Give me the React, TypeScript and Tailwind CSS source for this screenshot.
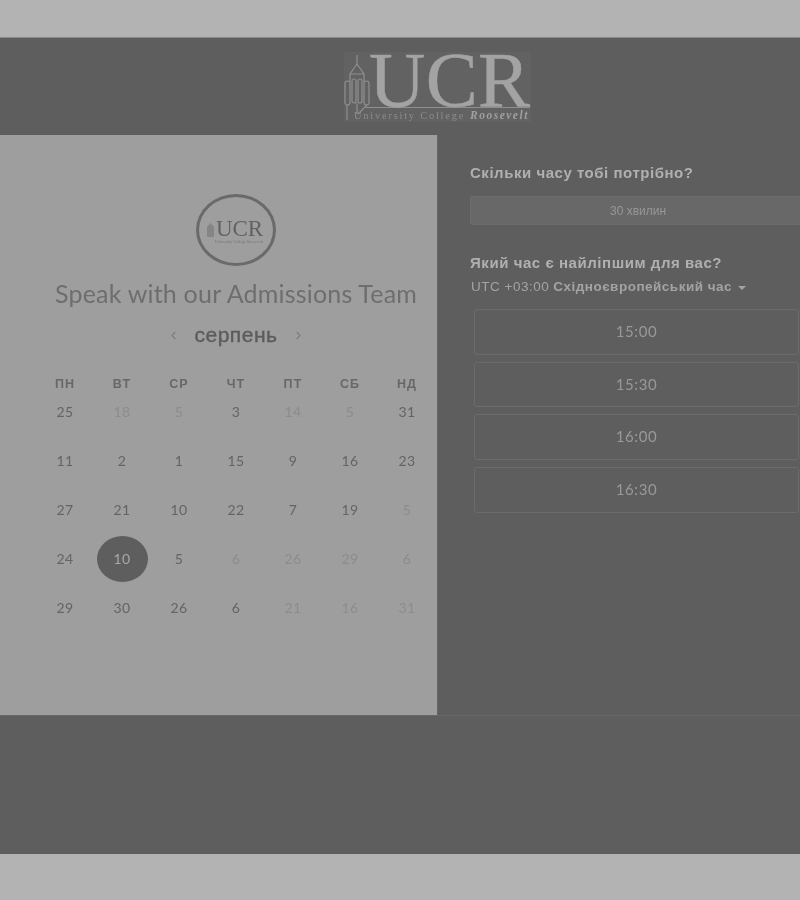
import { ChevronLeft, ChevronRight } from "lucide-react";

const weekDays = ["ПН", "ВТ", "СР", "ЧТ", "ПТ", "СБ", "НД"];

// level: 0 = faded, 1 = normal, 2 = selected
const days: [string, number][] = [
  ["25", 1], ["18", 0], ["5", 0], ["3", 1], ["14", 0], ["5", 0], ["31", 1],
  ["11", 1], ["2", 1], ["1", 1], ["15", 1], ["9", 1], ["16", 1], ["23", 1],
  ["27", 1], ["21", 1], ["10", 1], ["22", 1], ["7", 1], ["19", 1], ["5", 0],
  ["24", 1], ["10", 2], ["5", 1], ["6", 0], ["26", 0], ["29", 0], ["6", 0],
  ["29", 1], ["30", 1], ["26", 1], ["6", 1], ["21", 0], ["16", 0], ["31", 0],
];

const slots = ["15:00", "15:30", "16:00", "16:30"];

const Tower = ({ stroke }: { stroke: string }) => (
  <g fill="none" stroke={stroke} strokeWidth="1.2">
    <path d="M13 3 V12 M13 12 L6 22 V30 M13 12 L20 22 V30 M6 22 H20" />
    <rect x="1" y="29" width="5" height="24" rx="2.5" />
    <rect x="8" y="27" width="4" height="24" rx="2" />
    <rect x="14" y="27" width="4" height="24" rx="2" />
    <rect x="20" y="29" width="5" height="24" rx="2.5" />
    <path d="M3 53 V68 M13 51 V62 M23 53 L14 62" />
  </g>
);

const HeaderLogo = () => (
  <svg width="187" height="70" viewBox="0 0 187 70" className="block bg-[#626262] blur-[0.6px]">
    <Tower stroke="#8f8f8f" />
    <path d="M22 55.5 H186" stroke="#8f8f8f" strokeWidth="1" />
    <text x="25" y="53.5" fontFamily="Liberation Serif" fontSize="78" fill="#a3a3a3" stroke="#a3a3a3" strokeWidth="0.5" textLength="161" lengthAdjust="spacing">UCR</text>
    <text x="10" y="67" fontFamily="Liberation Serif" fontSize="10.5" letterSpacing="1.75" fill="#8c8c8c">University College</text>
    <text x="126" y="67" fontFamily="Liberation Serif" fontSize="11.5" fontStyle="italic" fontWeight="700" letterSpacing="1.5" fill="#a0a0a0">Roosevelt</text>
  </svg>
);

const RoundLogo = () => (
  <div className="flex h-[72px] w-[80px] items-center justify-center rounded-[50%] border-[3px] border-[#6a6a6a] blur-[0.4px]">
    <svg width="60" height="30" viewBox="0 0 60 30">
      <path d="M1 22 V12 L4.5 8 L8 12 V22 Z" fill="#858585" />
      <text x="10" y="21" fontFamily="Liberation Serif" fontSize="23" fill="#626262" textLength="47" lengthAdjust="spacing">UCR</text>
      <text x="9" y="27.5" fontFamily="Liberation Serif" fontSize="3.6" fill="#6f6f6f" letterSpacing="0.2">University College Roosevelt</text>
    </svg>
  </div>
);

const CalendarPanel = () => (
  <div className="flex w-[437px] flex-col items-center bg-[#9e9e9e] pl-[35px] pt-[59px]">
    <RoundLogo />
    <h1 className="mt-[11px] whitespace-nowrap text-[25px] leading-[32px] tracking-[0.2px] text-[#6e6e6e] blur-[0.3px] font-['Lato',sans-serif]">
      Speak with our Admissions Team
    </h1>
    <div className="mt-[10px] flex h-[32px] w-[138px] items-center justify-between font-['Liberation_Sans',sans-serif] blur-[0.3px]">
      <ChevronLeft size={13} strokeWidth={2} className="text-[#7e7e7e]" />
      <span className="text-[21px] leading-[32px] tracking-[0.5px] text-[#5c5c5c] [-webkit-text-stroke:0.4px_#5c5c5c]">серпень</span>
      <ChevronRight size={13} strokeWidth={2} className="text-[#7e7e7e]" />
    </div>
    <div className="mt-[26px] grid w-[399px] grid-cols-7 font-['Liberation_Sans',sans-serif] blur-[0.3px]">
      {weekDays.map((d) => (
        <div key={d} className="flex h-[14px] items-center justify-center text-[12.5px] font-bold tracking-[1.1px] text-[#686868]">
          {d}
        </div>
      ))}
    </div>
    <div className="mt-[10.5px] grid w-[399px] grid-cols-7 auto-rows-[49px] font-['Lato',sans-serif] text-[14px] tracking-[0.3px]">
      {days.map(([n, level], i) => (
        <div key={i} className="flex items-start justify-center">
          {level === 2 ? (
            <span className="-mt-[13px] flex h-[46px] w-[51px] items-center justify-center rounded-[50%] bg-[#5e5e5e] text-[#a8a8a8] blur-[0.3px]">
              {n}
            </span>
          ) : (
            <span className={`flex h-[20px] items-center blur-[0.3px] ${level === 1 ? "text-[#646464]" : "text-[#8c8c8c]"}`}>{n}</span>
          )}
        </div>
      ))}
    </div>
  </div>
);

const TimePanel = () => (
  <div className="flex flex-1 flex-col overflow-hidden border-l border-[#666666] bg-[#5e5e5e] pl-[32px] pt-[28px] font-['Liberation_Sans',sans-serif]">
    <h2 className="whitespace-nowrap text-[15px] leading-[20px] font-bold tracking-[0.53px] text-[#b0b0b0] blur-[0.3px]">Скільки часу тобі потрібно?</h2>
    <div className="mt-[13px] flex h-[29px] w-[340px] shrink-0 items-center justify-center rounded-[2px] border border-[#6c6c6c] bg-[#686868] text-[12px] text-[#979797]">
      <span className="mr-[4px] blur-[0.3px]">30 хвилин</span>
    </div>
    <h2 className="mt-[28px] whitespace-nowrap text-[15px] leading-[20px] font-bold tracking-[0.55px] text-[#b0b0b0] blur-[0.3px]">Який час є найліпшим для вас?</h2>
    <div className="mt-[6px] flex items-center whitespace-nowrap text-[13.5px] leading-[16px] tracking-[0.5px] text-[#a3a3a3] blur-[0.3px]">
      <span className="ml-[1px]">UTC +03:00</span>
      <span className="ml-[4px] font-bold">Східноєвропейський час</span>
      <span className="ml-[6px] mt-[1px] h-0 w-0 border-x-[4px] border-t-[4px] border-x-transparent border-t-[#a3a3a3]" />
    </div>
    <div className="ml-[4px] mt-[14px] flex w-[325px] flex-col gap-[7.2px]">
      {slots.map((s) => (
        <div
          key={s}
          className="flex h-[45.5px] items-center justify-center rounded-[3px] border border-[#6b6b6b] pb-[1px] font-['Lato',sans-serif] text-[15px] tracking-[0.6px] text-[#999999]"
        >
          <span className="blur-[0.3px]">{s}</span>
        </div>
      ))}
    </div>
  </div>
);

export default function App() {
  return (
    <div className="flex h-[900px] w-[800px] flex-col overflow-hidden bg-[#b3b3b3]">
      <div className="h-[38px] shrink-0 border-b border-[#8a8a8a]" />
      <header className="flex h-[97px] shrink-0 items-start justify-center bg-[#5e5e5e] pl-[75px] pt-[14px]">
        <HeaderLogo />
      </header>
      <main className="flex h-[580px] shrink-0">
        <CalendarPanel />
        <TimePanel />
      </main>
      <footer className="h-[139px] shrink-0 border-t border-[#686868] bg-[#5e5e5e]" />
    </div>
  );
}
